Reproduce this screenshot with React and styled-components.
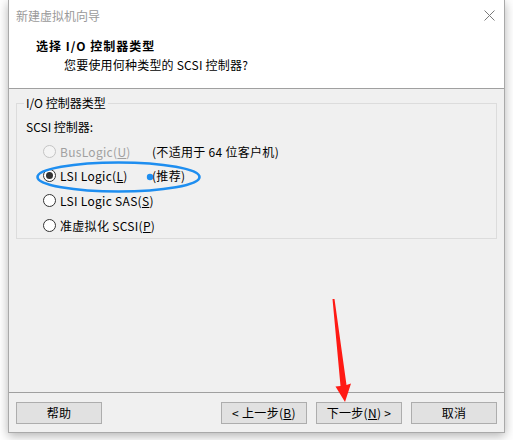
import styled, { createGlobalStyle } from "styled-components";

const GlobalStyle = createGlobalStyle`
  html, body {
    margin: 0;
    background: #ffffff;
  }
  body {
    font-family: "Noto Sans CJK SC", "Microsoft YaHei", sans-serif;
    font-size: 12px;
    color: #000;
  }
`;

const Page = styled.div`
  position: relative;
  width: 513px;
  height: 440px;
  padding-left: 8px;
  box-sizing: border-box;
  overflow: hidden;
`;

const Window = styled.div`
  width: 497px;
  height: 433px;
  display: flex;
  flex-direction: column;
  background: #f0f0f0;
  border: 1px solid #a9a9a9;
  border-top: none;
  box-sizing: border-box;
  box-shadow: 0 3px 10px rgba(0, 0, 0, 0.3);
`;

const Header = styled.div`
  height: 88px;
  background: #fff;
  border-bottom: 1px solid #a0a0a0;
  display: flex;
  flex-direction: column;
`;

const TitleBar = styled.div`
  height: 30px;
  display: flex;
  align-items: center;
  justify-content: space-between;
  padding: 0 9px 0 7px;
  color: #9a9a9a;
`;

const Heading = styled.div`
  padding-left: 27px;
  margin-top: 7px;
  font-weight: bold;
  line-height: 18px;
  letter-spacing: 1px;
`;

const SubHeading = styled.div`
  padding-left: 55px;
  line-height: 18px;
  margin-top: 1px;
  letter-spacing: 0.2px;
`;

const Content = styled.div`
  flex: 1;
  padding: 7px 7px 0;
`;

const Group = styled.fieldset`
  margin: 0;
  height: 143px;
  box-sizing: border-box;
  border: 1px solid #dcdcdc;
  padding: 6px 9px 0;
`;

const Legend = styled.legend`
  padding: 0 2px;
  margin-left: -2px;
  line-height: 14px;
`;

const Label = styled.div`
  line-height: 18px;
  margin-top: 2px;
`;

const Options = styled.div`
  display: flex;
  flex-direction: column;
  padding-left: 17px;
  margin-top: 3px;
  letter-spacing: 0.3px;
`;

const Option = styled.div`
  height: 24.6px;
  display: flex;
  align-items: center;
  color: ${(p) => (p.$disabled ? "#a0a0a0" : "#000")};
`;

const Radio = styled.span`
  width: 13px;
  height: 13px;
  box-sizing: border-box;
  border-radius: 50%;
  border: 1px solid ${(p) => (p.$disabled ? "#c4c4c4" : "#333")};
  background: ${(p) => (p.$disabled ? "#f4f4f4" : "#fff")};
  display: flex;
  align-items: center;
  justify-content: center;
  margin-right: 4px;

  &::after {
    content: "";
    width: 7px;
    height: 7px;
    border-radius: 50%;
    background: #333;
    display: ${(p) => (p.$checked ? "block" : "none")};
  }
`;

const OptionText = styled.span`
  width: 92px;
`;

const Note = styled.span`
  color: #000;
`;

const Footer = styled.div`
  border-top: 1px solid #a0a0a0;
  padding: 9px 7px 8px;
  display: flex;
  gap: 9px;
`;

const Button = styled.button`
  width: 86px;
  height: 22px;
  box-sizing: border-box;
  border: 1px solid #adadad;
  background: #e1e1e1;
  font: inherit;
  color: #000;
  padding: 0;
  line-height: 18px;
  letter-spacing: 0.3px;
  margin-left: ${(p) => (p.$push ? "auto" : "0")};
`;

const Mark = styled.svg`
  position: absolute;
  left: 0;
  top: 0;
  pointer-events: none;
`;

function CloseIcon() {
  return (
    <svg width="11" height="11" viewBox="0 0 11 11">
      <path d="M0.5 0.5 L10.5 10.5 M10.5 0.5 L0.5 10.5" stroke="#7a7a7a" strokeWidth="1" fill="none" />
    </svg>
  );
}

function App() {
  return (
    <>
      <GlobalStyle />
      <Page>
        <Window>
          <Header>
            <TitleBar>
              <span>新建虚拟机向导</span>
              <CloseIcon />
            </TitleBar>
            <Heading>选择 I/O 控制器类型</Heading>
            <SubHeading>您要使用何种类型的 SCSI 控制器?</SubHeading>
          </Header>
          <Content>
            <Group>
              <Legend>I/O 控制器类型</Legend>
              <Label>SCSI 控制器:</Label>
              <Options>
                <Option $disabled>
                  <Radio $disabled />
                  <OptionText>
                    BusLogic(<u>U</u>)
                  </OptionText>
                  <Note>(不适用于 64 位客户机)</Note>
                </Option>
                <Option>
                  <Radio $checked />
                  <OptionText>
                    LSI Logic(<u>L</u>)
                  </OptionText>
                  <Note>(推荐)</Note>
                </Option>
                <Option>
                  <Radio />
                  <span>
                    LSI Logic SAS(<u>S</u>)
                  </span>
                </Option>
                <Option>
                  <Radio />
                  <span>
                    准虚拟化 SCSI(<u>P</u>)
                  </span>
                </Option>
              </Options>
            </Group>
          </Content>
          <Footer>
            <Button>帮助</Button>
            <Button $push>
              &lt; 上一步(<u>B</u>)
            </Button>
            <Button>
              下一步(<u>N</u>) &gt;
            </Button>
            <Button>取消</Button>
          </Footer>
        </Window>
        <Mark width="513" height="440" viewBox="0 0 513 440">
          <ellipse cx="118.5" cy="177" rx="81" ry="14.5" fill="none" stroke="#1e8ef0" strokeWidth="2.6" />
          <circle cx="150" cy="177" r="3.2" fill="#1e8ef0" />
          <path
            d="M332.5 299 L334.5 299 L346.5 385 L351 383.5 L345 402 L335.5 386.5 L340.5 386 Z"
            fill="#ff1a14"
          />
        </Mark>
      </Page>
    </>
  );
}

export default App;
